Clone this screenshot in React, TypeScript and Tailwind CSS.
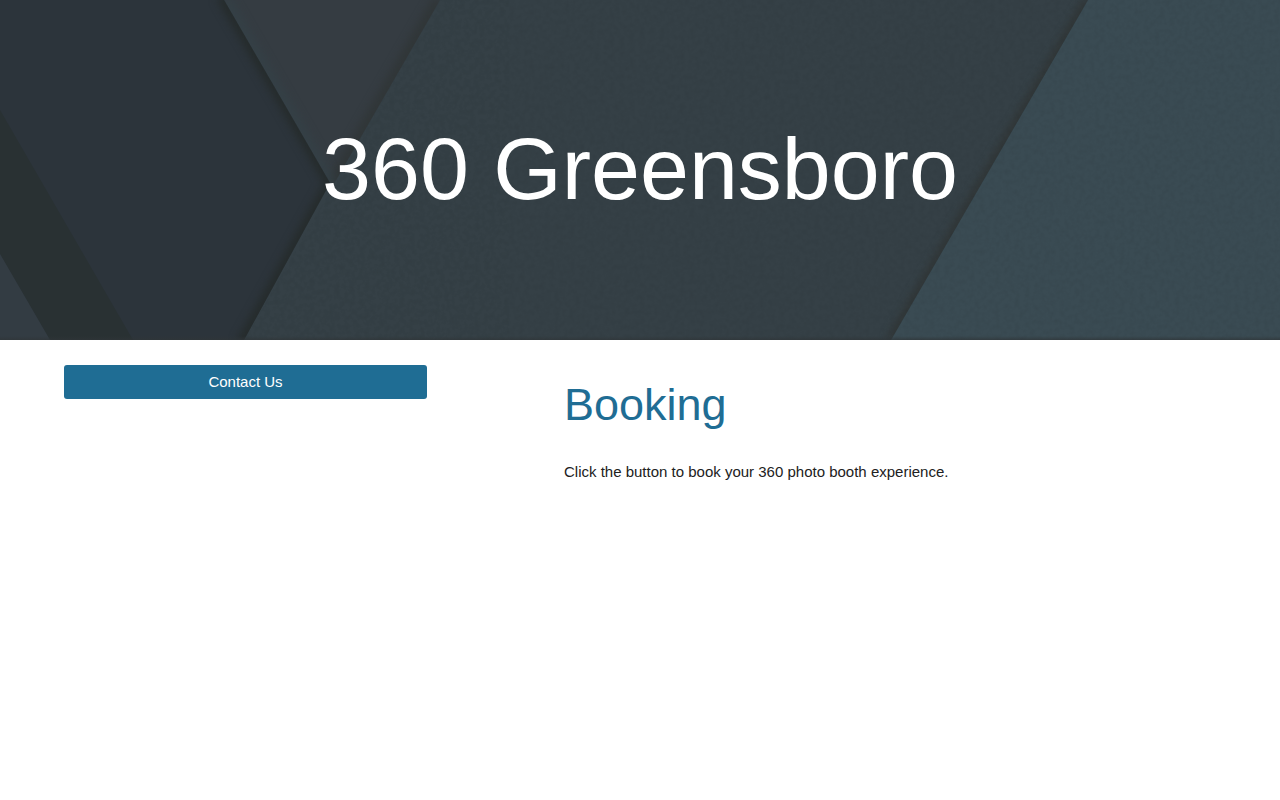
function PaperBackdrop() {
  return (
    <svg
      className="absolute inset-0 h-full w-full"
      viewBox="0 0 1280 340"
      preserveAspectRatio="xMidYMid slice"
      aria-hidden="true"
    >
      <defs>
        <filter id="soft" x="-20%" y="-20%" width="140%" height="140%" colorInterpolationFilters="sRGB">
          <feGaussianBlur stdDeviation="4" />
        </filter>
        <filter id="grain" x="0" y="0" width="100%" height="100%" colorInterpolationFilters="sRGB">
          <feTurbulence type="fractalNoise" baseFrequency="0.2" numOctaves="3" seed="4" />
          <feColorMatrix values="0 0 0 0 0.1  0 0 0 0 0.12  0 0 0 0 0.13  2 0 0 0 -0.8" />
        </filter>
        <linearGradient id="bottom" x1="0" y1="0" x2="0" y2="1">
          <stop offset="0" stopColor="#2f3538" stopOpacity="0" />
          <stop offset="1" stopColor="#2f3538" stopOpacity="0.7" />
        </linearGradient>
        <clipPath id="hexagon">
          <path d="M0 0H224L330 183L244 340H0Z" />
        </clipPath>
        <clipPath id="wedge">
          <path d="M224 0H440L332 187Z" />
        </clipPath>
        <clipPath id="middle">
          <path d="M440 0H1088L891 340H244Z" />
        </clipPath>
        <clipPath id="paper">
          <path d="M440 0H1280V340H244Z" />
        </clipPath>
      </defs>
      <rect width="1280" height="340" fill="#354046" />
      <path d="M1088 0H1280V340H891Z" fill="#3a4b53" />
      <g clipPath="url(#middle)">
        <path d="M1088 0L891 340" stroke="#2f3231" strokeWidth="8" strokeOpacity="0.9" filter="url(#soft)" />
      </g>
      <g clipPath="url(#paper)" opacity="0.08">
        <rect x="240" width="1040" height="340" filter="url(#grain)" />
      </g>
      <path d="M224 0H440L332 187Z" fill="#353c42" />
      <g clipPath="url(#wedge)">
        <path d="M440 0L332 187" stroke="#303536" strokeWidth="14" strokeOpacity="0.9" filter="url(#soft)" />
        <path d="M224 0L332 187" stroke="#33434a" strokeWidth="14" strokeOpacity="0.5" filter="url(#soft)" />
      </g>
      <path d="M0 0H224L330 183L244 340H0Z" fill="#2c343b" />
      <g clipPath="url(#hexagon)">
        <path d="M222 -4L331 183L242 344" fill="none" stroke="#252b2b" strokeWidth="12" filter="url(#soft)" />
      </g>
      <path d="M0 110L133 340H50L0 254Z" fill="#293133" />
      <path d="M0 254L50 340H0Z" fill="#333c43" />
      <rect y="336" width="1280" height="4" fill="url(#bottom)" />
    </svg>
  );
}

export default function App() {
  return (
    <div className="min-h-screen bg-white font-[Arial,'Liberation_Sans',sans-serif]">
      <header className="relative overflow-hidden bg-[#343f45] px-16 pt-[119px] pb-[121px]">
        <PaperBackdrop />
        <h1 className="relative text-center text-[88px] leading-[100px] text-white">360 Greensboro</h1>
      </header>

      <main className="grid grid-cols-[363fr_652fr] items-start gap-[137px] px-16 pt-[25px]">
        <a
          href="#contact"
          className="block rounded-[3px] bg-[#1f6d94] py-[6px] text-center text-[15px] leading-[22px] text-white"
        >
          Contact Us
        </a>
        <section className="pt-3">
          <h2 className="text-[45px] leading-[56px] text-[#1f6d94]">Booking</h2>
          <p className="pt-[28px] text-[15px] leading-[22px] text-[#212121]">
            Click the button to book your 360 photo booth experience.
          </p>
        </section>
      </main>
    </div>
  );
}
